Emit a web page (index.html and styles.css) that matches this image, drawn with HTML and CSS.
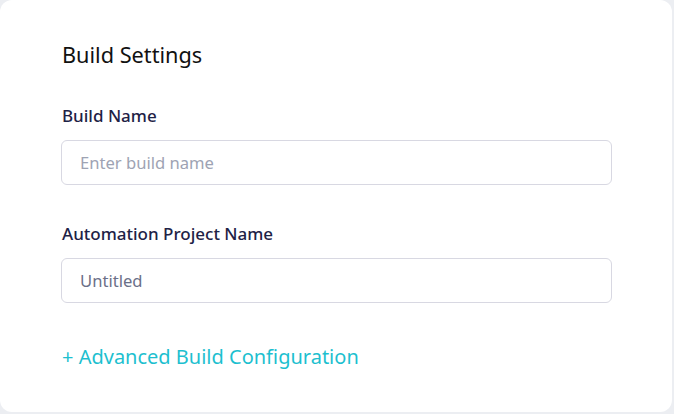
FILE: index.html
```html
<!DOCTYPE html>
<html lang="en">
<head>
<meta charset="utf-8">
<title>Build Settings</title>
<link rel="stylesheet" href="styles.css">
</head>
<body>
<div class="card">
  <h2 class="title">Build Settings</h2>
  <div class="field">
    <label class="label" for="build-name">Build Name</label>
    <input class="input" id="build-name" type="text" placeholder="Enter build name">
  </div>
  <div class="field">
    <label class="label" for="project-name">Automation Project Name</label>
    <input class="input input-value" id="project-name" type="text" value="Untitled">
  </div>
  <a class="link" href="#">+ Advanced Build Configuration</a>
</div>
</body>
</html>
```
FILE: styles.css
```css
* { box-sizing: border-box; }
html, body { margin: 0; padding: 0; }
body {
  width: 674px;
  height: 414px;
  background: #eceef2;
  font-family: "Noto Sans", "Open Sans", sans-serif;
  overflow: hidden;
}
.card {
  width: 672px;
  height: 412px;
  background: #ffffff;
  border-radius: 12px;
  padding: 40px 62px 0 61px;
  display: flex;
  flex-direction: column;
}
.title {
  margin: 0 0 35px 1px;
  font-size: 21.7px;
  font-weight: 400;
  line-height: 30px;
  color: #111111;
}
.field {
  display: flex;
  flex-direction: column;
  margin-bottom: 38px;
}
.label {
  margin: 0 0 13px 1px;
  font-size: 17px;
  font-weight: 500;
  line-height: 22px;
  color: #1e2246;
}
.input {
  width: 551px;
  height: 45px;
  border: 1px solid #d8d8e2;
  border-radius: 6px;
  padding: 0 18px;
  font-family: inherit;
  font-size: 16.6px;
  color: #6b7088;
  background: #fff;
  outline: none;
}
.input::placeholder { color: #9ea3b3; }
.link {
  margin: 3px 0 0 1px;
  font-size: 20px;
  line-height: 26px;
  color: #1dbfcf;
  text-decoration: none;
}
```
